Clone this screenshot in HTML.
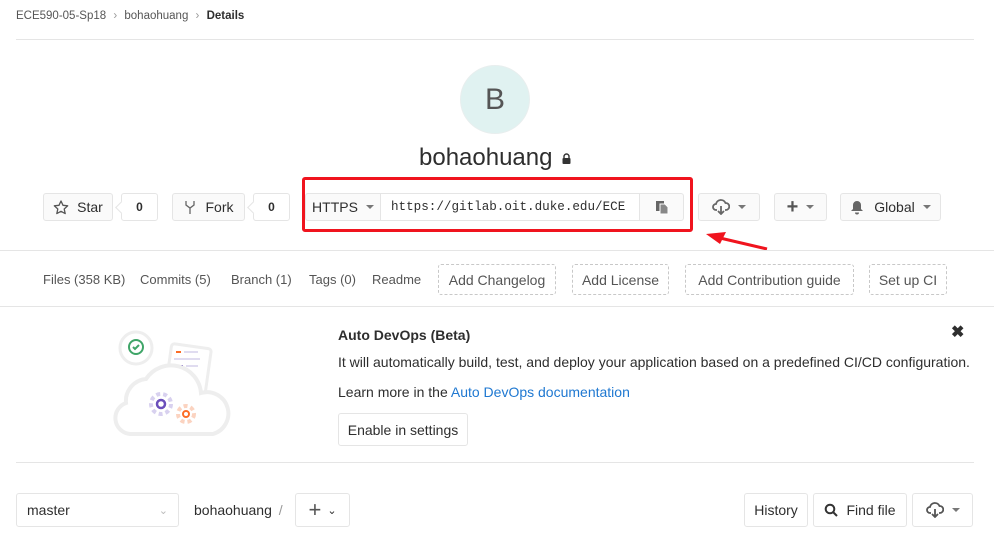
<!DOCTYPE html>
<html><head><meta charset="utf-8"><style>
*{box-sizing:border-box;margin:0;padding:0}
body{width:994px;height:533px;overflow:hidden;background:#fff;font-family:"Liberation Sans",sans-serif;font-size:14px;color:#2e2e2e;position:relative}
.a{position:absolute;white-space:nowrap}
.btn{position:absolute;border:1px solid #e5e5e5;border-radius:3px;background:#fafafa;height:28px;display:flex;align-items:center;justify-content:center;font-size:14px;color:#2e2e2e}
.cnt{position:absolute;border:1px solid #e5e5e5;border-radius:3px;background:#fff;height:28px;display:flex;align-items:center;justify-content:center;font-size:12px;font-weight:bold}
.cnt:before{content:"";position:absolute;left:-5px;top:9px;width:8px;height:8px;background:#fff;border-left:1px solid #e5e5e5;border-bottom:1px solid #e5e5e5;transform:rotate(45deg)}
.dash{position:absolute;border:1px dashed #c8c8c8;border-radius:3px;height:31px;top:264px;display:flex;align-items:center;justify-content:center;color:#555;font-size:14px}
.car{display:inline-block;width:0;height:0;border-left:4px solid transparent;border-right:4px solid transparent;border-top:4px solid #777;margin-left:8px}
.hr{position:absolute;height:1px;background:#e5e5e5}
.nav{position:absolute;top:272px;color:#555;font-size:13px}
</style></head><body>
<div class="a" style="left:16px;top:10px;font-size:11.5px;color:#555">ECE590-05-Sp18 <span style="color:#999;margin:0 4px">›</span> bohaohuang <span style="color:#999;margin:0 4px">›</span> <b style="color:#2e2e2e">Details</b></div>
<div class="hr" style="left:16px;width:958px;top:39px"></div>
<div class="a" style="left:460px;top:65px;width:70px;height:69px;border-radius:50%;background:#e0f2f1;border:1px solid #e8eeee;text-align:center;line-height:68px;font-size:30px;color:#555">B</div>
<div class="a" style="left:419px;top:144px;font-size:24px;color:#2e2e2e">bohaohuang</div>
<svg class="a" style="left:562px;top:153px" width="9" height="11" viewBox="0 0 9 11"><path d="M2 5V3.5a2.5 2.5 0 0 1 5 0V5" fill="none" stroke="#333" stroke-width="1.4"/><rect x="0.5" y="5" width="8" height="6" rx="1" fill="#333"/></svg>

<div class="btn" style="left:43px;top:193px;width:70px"><svg width="16" height="15" viewBox="0 0 16 15" style="margin-right:8px"><path d="M8 1l2 4.3 4.7.5-3.5 3.2 1 4.6L8 11.3 3.8 13.6l1-4.6L1.3 5.8 6 5.3z" fill="none" stroke="#555" stroke-width="1.3" stroke-linejoin="round"/></svg>Star</div>
<div class="cnt" style="left:121px;top:193px;width:37px">0</div>
<div class="btn" style="left:172px;top:193px;width:73px"><svg width="12" height="15" viewBox="0 0 12 15" style="margin-right:10px"><path d="M2 1v4l4 3 4-3V1M6 8v6" fill="none" stroke="#666" stroke-width="1.3"/></svg>Fork</div>
<div class="cnt" style="left:253px;top:193px;width:37px">0</div>

<div class="a" style="left:302px;top:177px;width:391px;height:55px;border:3px solid #f0141e;border-radius:3px"></div>
<div class="btn" style="left:305px;top:193px;width:76px;border-radius:3px 0 0 3px">HTTPS<span class="car"></span></div>
<div class="a" style="left:380px;top:193px;width:260px;height:28px;border:1px solid #e5e5e5;font-family:'Liberation Mono',monospace;font-size:12.6px;line-height:26px;padding-left:10px;overflow:hidden">https://gitlab.oit.duke.edu/ECE</div>
<div class="btn" style="left:639px;top:193px;width:45px;border-radius:0 3px 3px 0"><svg width="14" height="15" viewBox="0 0 14 15"><rect x="1" y="1" width="8" height="10" fill="#666"/><path d="M5 4h5l3 3v7H5z" fill="#888" stroke="#fff" stroke-width="1"/></svg></div>

<div class="btn" style="left:698px;top:193px;width:62px"><svg width="18" height="16" viewBox="0 0 18 16"><path d="M5 11H4a3 3 0 0 1 0-6 5 5 0 0 1 9.5-1A3.5 3.5 0 0 1 14 11h-1" fill="none" stroke="#666" stroke-width="1.8"/><path d="M9 7v8M6 12l3 3 3-3" fill="none" stroke="#666" stroke-width="1.8"/></svg><span class="car"></span></div>
<div class="btn" style="left:774px;top:193px;width:53px"><span style="font-size:20px;font-weight:bold;color:#555;line-height:1">+</span><span class="car"></span></div>
<div class="btn" style="left:840px;top:193px;width:101px"><svg width="14" height="15" viewBox="0 0 14 15" style="margin-right:10px"><path d="M7 1a4 4 0 0 1 4 4v4l2 2H1l2-2V5a4 4 0 0 1 4-4zM5 12.5a2 2 0 0 0 4 0z" fill="#666"/></svg>Global<span class="car"></span></div>

<svg class="a" style="left:700px;top:225px" width="72" height="30" viewBox="0 0 72 30"><path d="M67 24L20 13" stroke="#f0141e" stroke-width="3"/><path d="M6 9l20-2-6 12z" fill="#f0141e"/></svg>

<div class="hr" style="left:0;width:994px;top:250px"></div>
<div class="nav" style="left:43px">Files (358 KB)</div>
<div class="nav" style="left:140px">Commits (5)</div>
<div class="nav" style="left:231px">Branch (1)</div>
<div class="nav" style="left:309px">Tags (0)</div>
<div class="nav" style="left:372px">Readme</div>
<div class="dash" style="left:438px;width:118px">Add Changelog</div>
<div class="dash" style="left:572px;width:97px">Add License</div>
<div class="dash" style="left:685px;width:169px">Add Contribution guide</div>
<div class="dash" style="left:869px;width:78px">Set up CI</div>
<div class="hr" style="left:0;width:994px;top:306px"></div>

<svg class="a" style="left:112px;top:326px" width="122" height="114" viewBox="0 0 122 114">
<rect x="56" y="20" width="40" height="52" rx="3" fill="#fff" stroke="#eee" stroke-width="3" transform="rotate(8 76 46)"/>
<rect x="64" y="25" width="5" height="2" fill="#fc6d26"/><rect x="72" y="25" width="14" height="2" fill="#e0dcf0"/>
<rect x="62" y="32" width="26" height="2" fill="#e0dcf0"/><rect x="62" y="39" width="9" height="2" fill="#6b4fbb"/><rect x="74" y="39" width="12" height="2" fill="#e0dcf0"/>
<path d="M18 108a16 16 0 0 1-4-31 22 22 0 0 1 20-24 30 30 0 0 1 55 14 20 20 0 0 1 12 41z" fill="#fff" stroke="#eee" stroke-width="4"/>
<circle cx="24" cy="22" r="16" fill="#fff" stroke="#eee" stroke-width="3"/>
<circle cx="24" cy="21" r="7" fill="none" stroke="#3fa568" stroke-width="2"/><path d="M21 21l2 2 4-4" fill="none" stroke="#3fa568" stroke-width="2"/>
<circle cx="49" cy="78" r="10" fill="none" stroke="#d8d1ef" stroke-width="4" stroke-dasharray="4 3"/><circle cx="49" cy="78" r="4" fill="none" stroke="#6b4fbb" stroke-width="2.5"/>
<circle cx="74" cy="88" r="8" fill="none" stroke="#fbd3c0" stroke-width="4" stroke-dasharray="4 3"/><circle cx="74" cy="88" r="3" fill="none" stroke="#fc6d26" stroke-width="2"/>
</svg>

<div class="a" style="left:338px;top:327px;font-weight:bold;font-size:14px">Auto DevOps (Beta)</div>
<div class="a" style="left:338px;top:354px;font-size:14px">It will automatically build, test, and deploy your application based on a predefined CI/CD configuration.</div>
<div class="a" style="left:338px;top:384px;font-size:14px">Learn more in the <span style="color:#1f78d1">Auto DevOps documentation</span></div>
<div class="btn" style="left:338px;top:413px;width:130px;height:33px;background:#fff">Enable in settings</div>
<div class="a" style="left:951px;top:322px;font-size:16px;font-weight:bold">✖</div>
<div class="hr" style="left:16px;width:958px;top:462px"></div>

<div class="btn" style="left:16px;top:493px;width:163px;height:34px;background:#fff;justify-content:space-between;padding:0 10px">master<span style="color:#bbb;font-size:11px">⌄</span></div>
<div class="a" style="left:194px;top:502px">bohaohuang <span style="color:#999;margin-left:3px">/</span></div>
<div class="btn" style="left:295px;top:493px;width:55px;height:34px;background:#fff"><span style="font-size:22px;color:#555;font-weight:300">+</span><span style="font-size:11px;margin-left:6px">⌄</span></div>
<div class="btn" style="left:744px;top:493px;width:64px;height:34px;background:#fff">History</div>
<div class="btn" style="left:813px;top:493px;width:94px;height:34px;background:#fff"><svg width="14" height="14" viewBox="0 0 14 14" style="margin-right:8px"><circle cx="6" cy="6" r="4.3" fill="none" stroke="#333" stroke-width="2"/><path d="M9 9l4 4" stroke="#333" stroke-width="2"/></svg>Find file</div>
<div class="btn" style="left:912px;top:493px;width:61px;height:34px;background:#fff"><svg width="18" height="16" viewBox="0 0 18 16"><path d="M5 11H4a3 3 0 0 1 0-6 5 5 0 0 1 9.5-1A3.5 3.5 0 0 1 14 11h-1" fill="none" stroke="#555" stroke-width="1.8"/><path d="M9 7v8M6 12l3 3 3-3" fill="none" stroke="#555" stroke-width="1.8"/></svg><span class="car"></span></div>
</body></html>
